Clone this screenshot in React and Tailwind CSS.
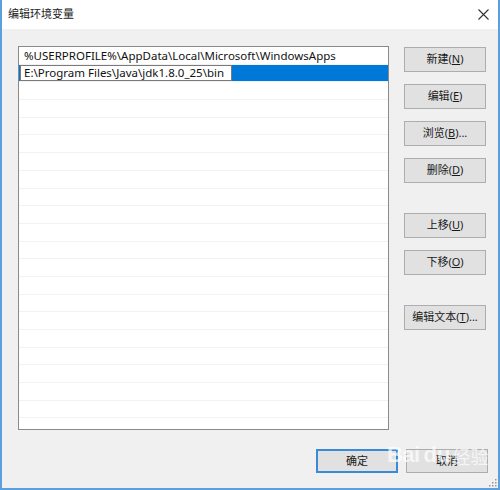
const paths = [
  '%USERPROFILE%\\AppData\\Local\\Microsoft\\WindowsApps',
  'E:\\Program Files\\Java\\jdk1.8.0_25\\bin',
];

const font = { fontFamily: '"Noto Sans", "Noto Sans CJK SC", sans-serif' };

function Btn({ label, hot, tail = '', primary }) {
  return (
    <button
      className={
        'w-[82px] h-[25px] shrink-0 bg-[#e1e1e1] text-[11px] text-[#1a1a1a] flex items-center justify-center ' +
        (primary ? 'border-2 border-[#3b8ad6]' : 'border border-[#adadad]')
      }
    >
      <span>
        {label}(<span className="underline">{hot}</span>){tail}
      </span>
    </button>
  );
}

export default function App() {
  const rows = Array.from({ length: 22 });

  return (
    <div
      className="w-[500px] h-[490px] bg-[#f0f0f0] border-x-2 border-b-2 border-[#5c9fdc] flex flex-col relative overflow-hidden"
      style={font}
    >
      {/* title bar */}
      <div className="h-[29px] bg-white flex items-center justify-between pl-[6px] pr-[9px] shrink-0">
        <span className="text-[11px] text-[#222]">编辑环境变量</span>
        <svg width="11" height="11" viewBox="0 0 11 11" className="text-[#333]">
          <path d="M0.5 0.5 L10.5 10.5 M10.5 0.5 L0.5 10.5" stroke="currentColor" strokeWidth="1.1" />
        </svg>
      </div>

      <div className="flex pt-[17px] pl-[16px] pr-[10px]">
        {/* list */}
        <div className="w-[371px] h-[384px] bg-white border border-[#8a8a8a] overflow-hidden">
          {rows.map((_, i) => (
            <div
              key={i}
              className="h-[17.7px] border-b border-[#f2f2f2] text-[11.5px] leading-[17px] text-[#111] whitespace-nowrap"
            >
              {i === 0 && <div className="pl-[5px]">{paths[0]}</div>}
              {i === 1 && (
                <div className="flex h-full bg-[#0078d7]">
                  <div className="ml-[1px] w-[212px] h-full bg-white border border-[#7a7a7a] pl-[3px] leading-[14px]">
                    {paths[1]}
                  </div>
                </div>
              )}
            </div>
          ))}
        </div>

        {/* side buttons */}
        <div className="ml-[15px] flex flex-col pt-[1px]">
          <div className="flex flex-col gap-[12px]">
            <Btn label="新建" hot="N" />
            <Btn label="编辑" hot="E" />
            <Btn label="浏览" hot="B" tail="..." />
            <Btn label="删除" hot="D" />
          </div>
          <div className="flex flex-col gap-[12px] mt-[30px]">
            <Btn label="上移" hot="U" />
            <Btn label="下移" hot="O" />
          </div>
          <div className="mt-[30px]">
            <Btn label="编辑文本" hot="T" tail="..." />
          </div>
        </div>
      </div>

      {/* bottom buttons */}
      <div className="flex justify-end gap-[8px] pr-[10px] mt-[19px]">
        <button className="w-[82px] h-[24px] bg-[#e1e1e1] border-2 border-[#3b8ad6] text-[11px] text-[#1a1a1a]">
          确定
        </button>
        <button className="w-[82px] h-[24px] bg-[#e1e1e1] border border-[#adadad] text-[11px] text-[#1a1a1a]">
          取消
        </button>
      </div>

      {/* watermark */}
      <div className="absolute left-[385px] top-[444px] flex items-end text-white/70 pointer-events-none">
        <span className="text-[22px] font-bold leading-none tracking-tight" style={{ fontFamily: '"Liberation Sans", sans-serif' }}>
          Bai
        </span>
        <span className="text-[22px] font-bold leading-none ml-[4px]" style={{ fontFamily: '"Liberation Sans", sans-serif' }}>
          du
        </span>
        <span className="text-[18px] leading-none ml-[2px]">经验</span>
      </div>

      {/* resize grip */}
      <svg width="8" height="8" viewBox="0 0 8 8" className="absolute right-[1px] bottom-[1px]">
        <rect x="6" y="0" width="1.5" height="1.5" fill="#999" />
        <rect x="3" y="3" width="1.5" height="1.5" fill="#999" />
        <rect x="6" y="3" width="1.5" height="1.5" fill="#999" />
        <rect x="0" y="6" width="1.5" height="1.5" fill="#999" />
        <rect x="3" y="6" width="1.5" height="1.5" fill="#999" />
        <rect x="6" y="6" width="1.5" height="1.5" fill="#999" />
      </svg>
    </div>
  );
}
